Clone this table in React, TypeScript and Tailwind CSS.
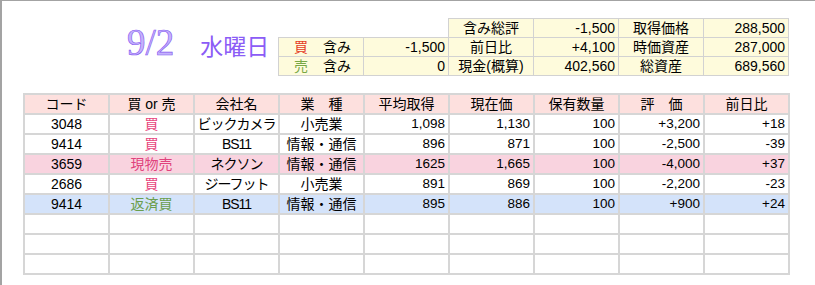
import React from 'react';

type Row = {
  code: string;
  side: string;
  sideColor: string;
  name: string;
  sector: string;
  avg: string;
  price: string;
  qty: string;
  pl: string;
  diff: string;
  bg: string;
};

const rows: Row[] = [
  { code: '3048', side: '買', sideColor: 'text-[#e8437c]', name: 'ビックカメラ', sector: '小売業', avg: '1,098', price: '1,130', qty: '100', pl: '+3,200', diff: '+18', bg: 'bg-white' },
  { code: '9414', side: '買', sideColor: 'text-[#e8437c]', name: 'BS11', sector: '情報・通信', avg: '896', price: '871', qty: '100', pl: '-2,500', diff: '-39', bg: 'bg-white' },
  { code: '3659', side: '現物売', sideColor: 'text-[#e0437c]', name: 'ネクソン', sector: '情報・通信', avg: '1625', price: '1,665', qty: '100', pl: '-4,000', diff: '+37', bg: 'bg-[#f9d3df]' },
  { code: '2686', side: '買', sideColor: 'text-[#e8437c]', name: 'ジーフット', sector: '小売業', avg: '891', price: '869', qty: '100', pl: '-2,200', diff: '-23', bg: 'bg-white' },
  { code: '9414', side: '返済買', sideColor: 'text-[#6b9e4c]', name: 'BS11', sector: '情報・通信', avg: '895', price: '886', qty: '100', pl: '+900', diff: '+24', bg: 'bg-[#d4e3fa]' },
];

const headers = ['コード', '買 or 売', '会社名', '業　種', '平均取得', '現在価', '保有数量', '評　価', '前日比'];

const yellow = 'bg-[#fefbdc] border border-[#d2d2d2] h-[19px] px-[3px] leading-none';

const App: React.FC = () => {
  return (
    <div className="w-[815px] h-[285px] bg-white border-t border-l-2 border-[#a3a3a3] overflow-hidden font-['Liberation_Sans','Noto_Sans_CJK_JP',sans-serif] text-black">
      <div className="flex pt-[17px]">
        <div className="w-[276px] shrink-0 pl-[125px] pt-[6px] flex items-baseline text-[#8b5cf6]">
          <span className="font-['Liberation_Serif',serif] text-[37px] leading-none text-[#c4b2fc] [-webkit-text-stroke:0.6px_#8454f0]">9/2</span>
          <span className="ml-[26px] text-[23px] leading-none font-['Noto_Sans_CJK_JP',sans-serif]">水曜日</span>
        </div>
        <table className="border-collapse table-fixed w-[511px] text-[14px]">
          <tbody>
            <tr>
              <td className="w-[85px] h-[19px]" />
              <td className="w-[85px]" />
              <td className={`${yellow} text-center`}>含み総評</td>
              <td className={`${yellow} text-right`}>-1,500</td>
              <td className={`${yellow} text-center`}>取得価格</td>
              <td className={`${yellow} text-right`}>288,500</td>
            </tr>
            <tr>
              <td className={`${yellow} text-left`}>
                <span className="pl-[12px] text-[#e53b1f]">買</span>
                <span className="ml-[15px]">含み</span>
              </td>
              <td className={`${yellow} text-right`}>-1,500</td>
              <td className={`${yellow} text-center`}>前日比</td>
              <td className={`${yellow} text-right`}>+4,100</td>
              <td className={`${yellow} text-center`}>時価資産</td>
              <td className={`${yellow} text-right`}>287,000</td>
            </tr>
            <tr>
              <td className={`${yellow} text-left`}>
                <span className="pl-[12px] text-[#78a845]">売</span>
                <span className="ml-[15px]">含み</span>
              </td>
              <td className={`${yellow} text-right`}>0</td>
              <td className={`${yellow} text-center`}>現金(概算)</td>
              <td className={`${yellow} text-right`}>402,560</td>
              <td className={`${yellow} text-center`}>総資産</td>
              <td className={`${yellow} text-right`}>689,560</td>
            </tr>
          </tbody>
        </table>
      </div>

      <div className="ml-[21px] mt-[17px] w-max grid grid-cols-[repeat(9,83px)] auto-rows-[18px] gap-[2px] p-[2px] bg-[#d6d6d6] text-[13.5px] leading-[18px]">
        {headers.map((h) => (
          <div key={h} className="bg-[#fde0de] text-center text-[14px]">{h}</div>
        ))}
        {rows.map((r, i) => (
          <React.Fragment key={i}>
            <div className={`${r.bg} text-center text-[14px]`}>{r.code}</div>
            <div className={`${r.bg} text-center text-[14px] ${r.sideColor}`}>{r.side}</div>
            <div className={`${r.bg} text-center text-[14px] whitespace-nowrap tracking-[-1px]`}>{r.name}</div>
            <div className={`${r.bg} text-center text-[14px] whitespace-nowrap`}>{r.sector}</div>
            <div className={`${r.bg} text-right pr-[3px]`}>{r.avg}</div>
            <div className={`${r.bg} text-right pr-[3px]`}>{r.price}</div>
            <div className={`${r.bg} text-right pr-[3px]`}>{r.qty}</div>
            <div className={`${r.bg} text-right pr-[3px]`}>{r.pl}</div>
            <div className={`${r.bg} text-right pr-[3px]`}>{r.diff}</div>
          </React.Fragment>
        ))}
        {Array.from({ length: 27 }).map((_, i) => (
          <div key={`e${i}`} className="bg-white" />
        ))}
      </div>
    </div>
  );
};

export default App;
